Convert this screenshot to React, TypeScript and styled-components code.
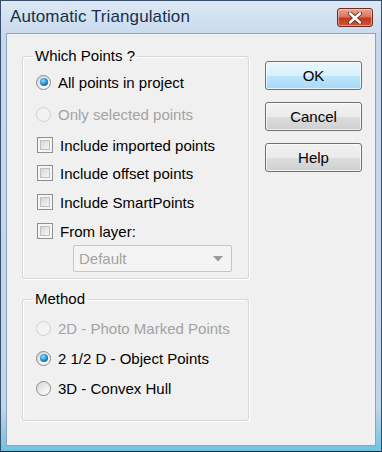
import React from "react";
import styled, { createGlobalStyle } from "styled-components";

const Global = createGlobalStyle`
  html, body { margin: 0; padding: 0; background: #ffffff; }
  body { font-family: "Liberation Sans", Arial, sans-serif; }
`;

const Window = styled.div`
  width: 382px;
  height: 452px;
  box-sizing: border-box;
  border: 1px solid #39506a;
  border-bottom-color: #1c2c3c;
  background: linear-gradient(#dce8f5, #c6d8ec 40px, #c2d6ea 90%, #6fc2e2);
  padding: 0 5px 5px 5px;
  display: flex;
  flex-direction: column;
`;

const TitleBar = styled.div`
  height: 32px;
  display: flex;
  align-items: center;
  justify-content: space-between;
  padding-left: 4px;
`;

const Title = styled.span`
  font-size: 17px;
  color: #1b2f4b;
  letter-spacing: 0.1px;
`;

const CloseBtn = styled.div`
  width: 36px;
  height: 19px;
  margin-right: 3px;
  margin-top: 1px;
  box-sizing: border-box;
  border: 1px solid #6b2b22;
  border-radius: 3px;
  background: linear-gradient(#eaa792, #d9745c 45%, #c2391d 55%, #d2553a);
  box-shadow: inset 0 0 0 1px rgba(255, 220, 210, 0.5);
  display: flex;
  align-items: center;
  justify-content: center;
`;

const Client = styled.div`
  flex: 1;
  background: #f0f0f0;
  border: 1px solid #8aa3bf;
  display: flex;
  align-items: flex-start;
  padding: 14px 0 0 15px;
  font-size: 15px;
  color: #000;
`;

const LeftCol = styled.div`
  width: 227px;
  display: flex;
  flex-direction: column;
  gap: 12px;
`;

const RightCol = styled.div`
  margin-left: 16px;
  padding-top: 13px;
  display: flex;
  flex-direction: column;
  gap: 12px;
`;

const Group = styled.fieldset<{ $h: number; $pb: number }>`
  margin: 0;
  width: 227px;
  height: ${(p) => p.$h}px;
  box-sizing: border-box;
  border: 1px solid #d3d6da;
  border-radius: 3px;
  box-shadow: inset 1px 1px 0 #fff, 1px 1px 0 #fff;
  padding: 0 0 ${(p) => p.$pb}px 13px;
  display: flex;
  flex-direction: column;
`;

const Legend = styled.legend`
  margin-left: -3px;
  padding: 0 2px;
  line-height: 16px;
  font-size: 15px;
`;

const Spacer = styled.div<{ $h: number }>`
  height: ${(p) => p.$h}px;
  flex: none;
`;

const Row = styled.div<{ $h: number; $disabled?: boolean }>`
  height: ${(p) => p.$h}px;
  display: flex;
  align-items: center;
  gap: 7px;
  color: ${(p) => (p.$disabled ? "#a3a3a3" : "#000")};
  white-space: nowrap;
`;

const RadioDot = styled.span<{ $checked?: boolean; $disabled?: boolean }>`
  width: 15px;
  height: 15px;
  box-sizing: border-box;
  border-radius: 50%;
  border: 1px solid ${(p) => (p.$disabled ? "#cfcfcf" : "#8a8a8a")};
  background: ${(p) =>
    p.$disabled
      ? "#f3f3f3"
      : "linear-gradient(135deg, #d4d4d4, #f2f2f2 60%, #ffffff)"};
  display: flex;
  align-items: center;
  justify-content: center;
  flex: none;
  &::after {
    content: "";
    display: ${(p) => (p.$checked ? "block" : "none")};
    width: 8px;
    height: 8px;
    border-radius: 50%;
    background: radial-gradient(circle at 40% 35%, #8fe0ff, #1c86c8 55%, #0b3f73);
  }
`;

const CheckBox = styled.span`
  width: 16px;
  height: 16px;
  box-sizing: border-box;
  border: 1px solid #8e8f8f;
  background: #f6f6f6;
  flex: none;
  margin-left: 1px;
  &::after {
    content: "";
    display: block;
    margin: 2px;
    width: 10px;
    height: 10px;
    box-sizing: border-box;
    border: 1px solid #c0c0c0;
    background: linear-gradient(135deg, #d6d6d6, #f6f6f6);
  }
`;

const Select = styled.div`
  margin-left: 37px;
  width: 159px;
  height: 27px;
  box-sizing: border-box;
  border: 1px solid #c6c6c6;
  border-radius: 2px;
  background: #f4f4f4;
  display: flex;
  align-items: center;
  justify-content: space-between;
  padding: 0 8px 0 5px;
  color: #a3a3a3;
`;

const Button = styled.div<{ $default?: boolean }>`
  width: 97px;
  height: 29px;
  box-sizing: border-box;
  border-radius: 3px;
  border: 1px solid ${(p) => (p.$default ? "#3c7fb1" : "#707070")};
  background: ${(p) =>
    p.$default
      ? "linear-gradient(#eaf6fd, #d9f0fc 50%, #bee6fd 51%, #a7d9f5)"
      : "linear-gradient(#f2f2f2, #ebebeb 50%, #dddddd 51%, #cfcfcf)"};
  box-shadow: inset 0 0 0 1px rgba(255, 255, 255, 0.7);
  display: flex;
  align-items: center;
  justify-content: center;
  font-size: 15px;
`;

const Radio = ({ label, checked, disabled, h }: { label: string; checked?: boolean; disabled?: boolean; h: number }) => (
  <Row $h={h} $disabled={disabled}>
    <RadioDot $checked={checked} $disabled={disabled} />
    <span>{label}</span>
  </Row>
);

const Check = ({ label, h }: { label: string; h: number }) => (
  <Row $h={h}>
    <CheckBox />
    <span>{label}</span>
  </Row>
);

export default function App() {
  return (
    <>
      <Global />
      <Window>
        <TitleBar>
          <Title>Automatic Triangulation</Title>
          <CloseBtn>
            <svg width="16" height="12" viewBox="0 0 16 12">
              <path d="M3 1.5 L13 10.5 M13 1.5 L3 10.5" stroke="#5a2418" strokeWidth="4.2" strokeLinecap="round" />
              <path d="M3 1.5 L13 10.5 M13 1.5 L3 10.5" stroke="#ffffff" strokeWidth="2.6" strokeLinecap="round" />
            </svg>
          </CloseBtn>
        </TitleBar>
        <Client>
          <LeftCol>
            <Group $h={231} $pb={6}>
              <Legend>Which Points ?</Legend>
              <Spacer $h={3} />
              <Radio label="All points in project" checked h={30} />
              <Radio label="Only selected points" disabled h={34} />
              <Check label="Include imported points" h={28} />
              <Check label="Include offset points" h={28} />
              <Check label="Include SmartPoints" h={30} />
              <Check label="From layer:" h={28} />
              <Select>
                <span>Default</span>
                <svg width="10" height="6" viewBox="0 0 10 6">
                  <path d="M0 0 H10 L5 5.5 Z" fill="#9a9a9a" />
                </svg>
              </Select>
            </Group>
            <Group $h={130} $pb={0}>
              <Legend>Method</Legend>
              <Spacer $h={6} />
              <Radio label="2D - Photo Marked Points" disabled h={30} />
              <Radio label="2 1/2 D - Object Points" checked h={30} />
              <Radio label="3D - Convex Hull" h={31} />
            </Group>
          </LeftCol>
          <RightCol>
            <Button $default>OK</Button>
            <Button>Cancel</Button>
            <Button>Help</Button>
          </RightCol>
        </Client>
      </Window>
    </>
  );
}
